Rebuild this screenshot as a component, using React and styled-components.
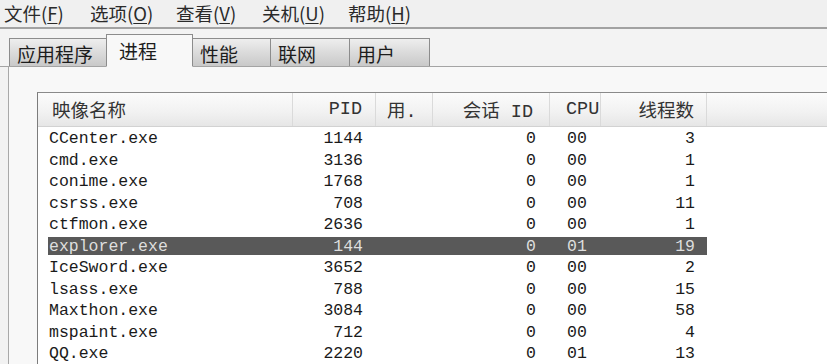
import React from 'react';
import styled, { createGlobalStyle } from 'styled-components';

const GlobalStyle = createGlobalStyle`
  html, body {
    margin: 0;
    padding: 0;
    background: #f0f0f0;
  }
  * {
    box-sizing: border-box;
  }
`;

const Window = styled.div`
  width: 827px;
  height: 364px;
  overflow: hidden;
  display: flex;
  flex-direction: column;
  background: #f2f2f2;
  font-family: "Noto Sans CJK SC", "Liberation Sans", sans-serif;
  color: #1c1c1c;
`;

const MenuBar = styled.div`
  height: 30px;
  display: flex;
  align-items: center;
  padding-left: 4px;
  background: #f0f0f0;
  border-bottom: 2px solid #a2a2a2;
  font-size: 18.5px;
  color: #2a2a2a;
`;

const MenuItem = styled.div`
  width: 86px;
  line-height: 1;
  white-space: nowrap;

  u {
    text-decoration: underline;
    text-underline-offset: 2px;
  }
`;

const TabStrip = styled.div`
  height: 40px;
  display: flex;
  align-items: flex-end;
  padding-left: 10px;
  border-bottom: 1px solid #a4a4a4;
  background: #f3f3f3;
`;

const Tab = styled.div`
  width: ${p => p.$w}px;
  height: ${p => (p.$active ? 33 : 28)}px;
  margin-bottom: ${p => (p.$active ? -1 : 0)}px;
  margin-left: -1px;
  padding-left: ${p => (p.$active ? 12 : 7)}px;
  padding-top: ${p => (p.$active ? 4 : 3)}px;
  border: 1px solid #8c8c8c;
  border-bottom: ${p => (p.$active ? '1px solid #f8f8f8' : 'none')};
  background: ${p => (p.$active
    ? '#f8f8f8'
    : 'linear-gradient(#eeeeee, #d9d9d9 55%, #c9c9c9)')};
  font-size: 19px;
  line-height: 24px;
  position: relative;
  z-index: ${p => (p.$active ? 1 : 0)};
`;

const Panel = styled.div`
  flex: 1;
  margin-left: 8px;
  border-left: 1px solid #a8a8a8;
  background: #f8f8f8;
  padding: 25px 0 0 28px;
  display: flex;
`;

const ListView = styled.div`
  flex: 1;
  border-left: 1px solid #7c7c7c;
  border-top: 1px solid #8a8a8a;
  background: #ffffff;
`;

const HeaderRow = styled.div`
  height: 34px;
  display: grid;
  grid-template-columns: 255px 83px 57px 117px 51px 106px 1fr;
  background: linear-gradient(#fbfbfb, #f1f1f1 60%, #e6e6e6);
  border-bottom: 1px solid #d2d2d2;
  font-family: "Liberation Mono", "Noto Sans CJK SC", monospace;
  font-size: 18.5px;
`;

const HeaderCell = styled.div`
  display: flex;
  align-items: center;
  justify-content: ${p => (p.$right ? 'flex-end' : 'flex-start')};
  padding-left: ${p => p.$pl || 0}px;
  padding-right: ${p => p.$pr || 0}px;
  border-right: ${p => (p.$last ? 'none' : '1px solid #dadada')};
  white-space: nowrap;
  color: #333;
`;

const Rows = styled.div`
  padding-top: 1px;
  padding-left: 10px;
`;

const Row = styled.div`
  width: 659px;
  height: 21.5px;
  padding: 1.5px 0;
  display: grid;
  grid-template-columns: 245px 83px 57px 117px 51px 106px;
  align-items: center;
  font-family: "Liberation Mono", monospace;
  font-size: 16.5px;
  background: ${p => (p.$selected ? '#595959' : 'transparent')};
  background-clip: content-box;
  color: ${p => (p.$selected ? '#dedede' : '#1a1a1a')};
`;

const Cell = styled.div`
  text-align: ${p => (p.$right ? 'right' : 'left')};
  padding-left: ${p => p.$pl || 0}px;
  padding-right: ${p => p.$pr || 0}px;
  white-space: nowrap;
`;

const menus = [
  ['文件', 'F'],
  ['选项', 'O'],
  ['查看', 'V'],
  ['关机', 'U'],
  ['帮助', 'H'],
];

const tabs = [
  { label: '应用程序', w: 98 },
  { label: '进程', w: 87, active: true },
  { label: '性能', w: 79 },
  { label: '联网', w: 80 },
  { label: '用户', w: 81 },
];

const processes = [
  ['CCenter.exe', '1144', '0', '00', '3'],
  ['cmd.exe', '3136', '0', '00', '1'],
  ['conime.exe', '1768', '0', '00', '1'],
  ['csrss.exe', '708', '0', '00', '11'],
  ['ctfmon.exe', '2636', '0', '00', '1'],
  ['explorer.exe', '144', '0', '01', '19'],
  ['IceSword.exe', '3652', '0', '00', '2'],
  ['lsass.exe', '788', '0', '00', '15'],
  ['Maxthon.exe', '3084', '0', '00', '58'],
  ['mspaint.exe', '712', '0', '00', '4'],
  ['QQ.exe', '2220', '0', '01', '13'],
];

export default function App() {
  return (
    <>
      <GlobalStyle />
      <Window>
        <MenuBar>
          {menus.map(([label, key]) => (
            <MenuItem key={key}>
              {label}(<u>{key}</u>)
            </MenuItem>
          ))}
        </MenuBar>
        <TabStrip>
          {tabs.map(t => (
            <Tab key={t.label} $w={t.w} $active={t.active}>
              {t.label}
            </Tab>
          ))}
        </TabStrip>
        <Panel>
          <ListView>
            <HeaderRow>
              <HeaderCell $pl={14}>映像名称</HeaderCell>
              <HeaderCell $right $pr={13}>PID</HeaderCell>
              <HeaderCell $pl={11}>用.</HeaderCell>
              <HeaderCell $right $pr={16}>会话 ID</HeaderCell>
              <HeaderCell $pl={16}>CPU</HeaderCell>
              <HeaderCell $right $pr={12}>线程数</HeaderCell>
              <HeaderCell $last />
            </HeaderRow>
            <Rows>
              {processes.map(([name, pid, session, cpu, threads]) => (
                <Row key={name} $selected={name === 'explorer.exe'}>
                  <Cell $pl={1}>{name}</Cell>
                  <Cell $right $pr={13}>{pid}</Cell>
                  <Cell />
                  <Cell $right $pr={14}>{session}</Cell>
                  <Cell $pl={17}>{cpu}</Cell>
                  <Cell $right $pr={12}>{threads}</Cell>
                </Row>
              ))}
            </Rows>
          </ListView>
        </Panel>
      </Window>
    </>
  );
}
